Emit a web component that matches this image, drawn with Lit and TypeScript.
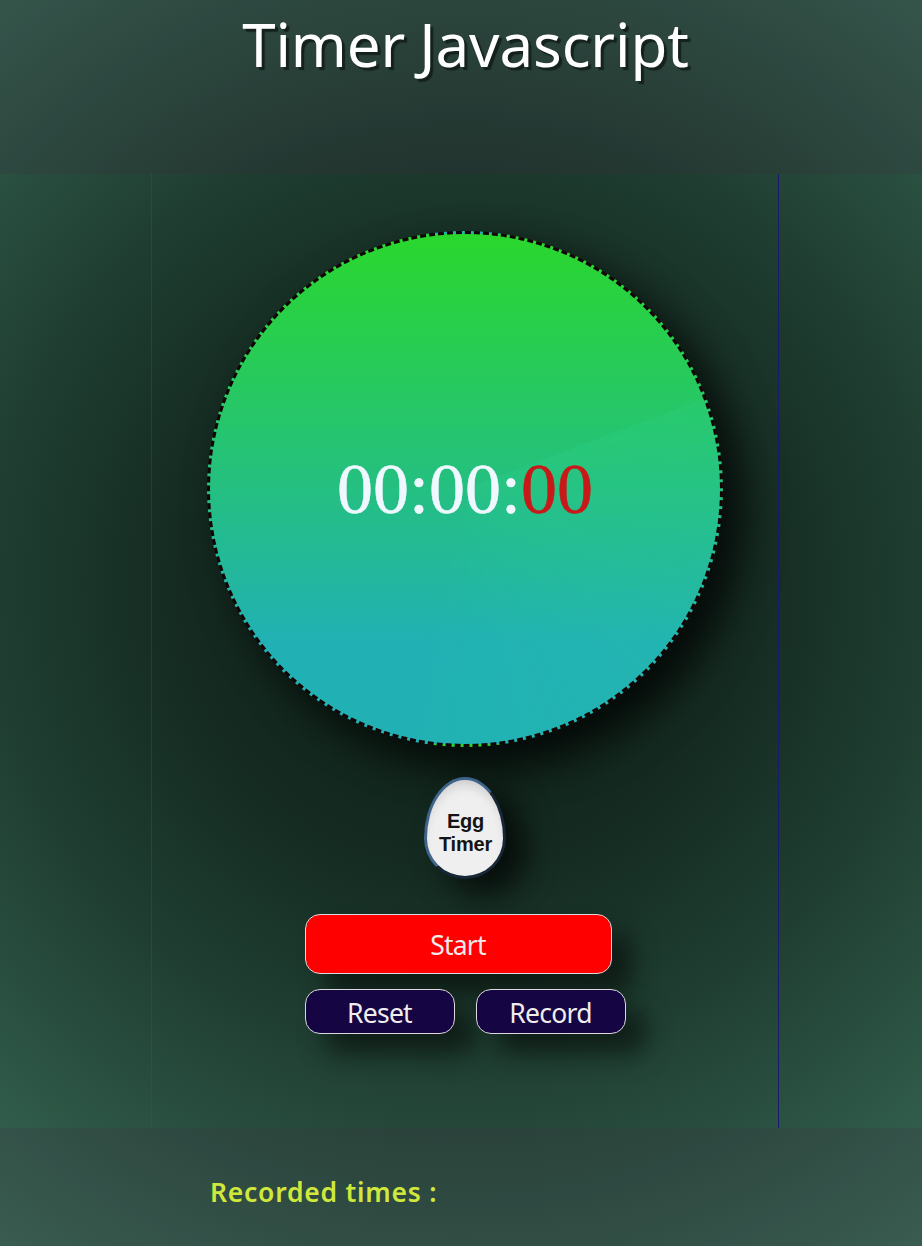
import { LitElement, html, css } from "lit";
import { customElement, state } from "lit/decorators.js";

@customElement("app-root")
export class AppRoot extends LitElement {
  @state() private minutes = "00";
  @state() private seconds = "00";
  @state() private hundredths = "00";

  static styles = css`
    :host {
      display: flex;
      flex-direction: column;
      box-sizing: border-box;
      width: 100%;
      height: 1246px;
      overflow: hidden;
      background: radial-gradient(circle farthest-corner at 50% 47%, #0a1912 0%, #162d23 38%, #1f3e31 58%, #386855 100%);
      font-family: "Noto Sans", sans-serif;
    }
    header {
      height: 174px;
      flex: none;
      box-sizing: border-box;
      padding: 3px 0 0 9px;
      background: rgba(58, 40, 58, 0.2);
      text-align: center;
    }
    h1 {
      margin: 0;
      font-weight: 400;
      font-size: 60px;
      line-height: 82px;
      letter-spacing: -0.1px;
      word-spacing: -1.5px;
      color: #fff;
      text-shadow: 3px 3px 1px #14211c;
      white-space: nowrap;
    }
    main {
      width: 628px;
      height: 954px;
      flex: none;
      box-sizing: border-box;
      margin-left: 151px;
      padding-top: 57px;
      border-left: 1px solid rgba(70, 80, 100, 0.4);
      border-right: 1px solid #191970;
      display: flex;
      flex-direction: column;
      align-items: center;
    }
    .dial {
      width: 516px;
      height: 516px;
      flex: none;
      box-sizing: border-box;
      border: 3px dashed #140505;
      border-radius: 50%;
      background:
        conic-gradient(from 69.3deg, rgba(50, 220, 150, 0.15), rgba(34, 178, 181, 0) 35%),
        linear-gradient(#2ad72d, #21b1b4 80%);
      box-shadow: 20px 20px 40px rgba(0, 0, 0, 0.75);
      display: flex;
      align-items: center;
      justify-content: center;
      font-family: "Liberation Serif", serif;
      font-size: 72px;
      line-height: 80px;
      color: aliceblue;
      -webkit-text-stroke: 0.5px currentColor;
    }
    .hundredths {
      color: #c81818;
    }
    button {
      margin: 0;
      padding: 0;
      box-sizing: border-box;
    }
    .egg {
      width: 82px;
      height: 102px;
      flex: none;
      margin-top: 30px;
      padding: 10px 0 0 1px;
      border: 3px outset #3f648b;
      border-radius: 50% 50% 50% 50% / 60% 60% 40% 40%;
      background: #efefef;
      box-shadow: 20px 15px 30px rgba(0, 0, 0, 0.7), inset 0 10px 14px -8px rgba(0, 0, 0, 0.2);
      font: bold 20px/23px "Liberation Sans", sans-serif;
      letter-spacing: -0.2px;
      color: #141414;
    }
    .controls {
      align-self: flex-start;
      margin: 35px 0 0 153px;
      display: grid;
      grid-template-columns: 150px 150px;
      grid-template-rows: 60px 45px;
      gap: 15px 21px;
    }
    .controls button {
      border: 1px solid #ddd8dc;
      border-radius: 15px;
      padding: 2px 1px 0 0;
      background: #150542;
      color: #f0ecec;
      font: 400 26.5px/36px "Noto Sans", sans-serif;
      letter-spacing: -0.75px;
      box-shadow: 20px 20px 25px rgba(0, 0, 0, 0.5);
    }
    .controls .start {
      grid-column: 1 / 3;
      width: 307px;
      background: #f00;
    }
    footer {
      flex: 1;
      box-sizing: border-box;
      padding: 46px 0 0 210px;
      background: rgba(64, 44, 64, 0.2);
    }
    h2 {
      margin: 0;
      font-size: 26.5px;
      line-height: 36px;
      font-weight: 600;
      letter-spacing: 0.75px;
      color: #d0e83c;
    }
  `;

  render() {
    return html`
      <header><h1>Timer Javascript</h1></header>
      <main>
        <div class="dial">
          <span>${this.minutes}:</span><span>${this.seconds}:</span><span class="hundredths">${this.hundredths}</span>
        </div>
        <button class="egg">Egg<br />Timer</button>
        <div class="controls">
          <button class="start">Start</button>
          <button>Reset</button>
          <button>Record</button>
        </div>
      </main>
      <footer><h2>Recorded times :</h2></footer>
    `;
  }
}
